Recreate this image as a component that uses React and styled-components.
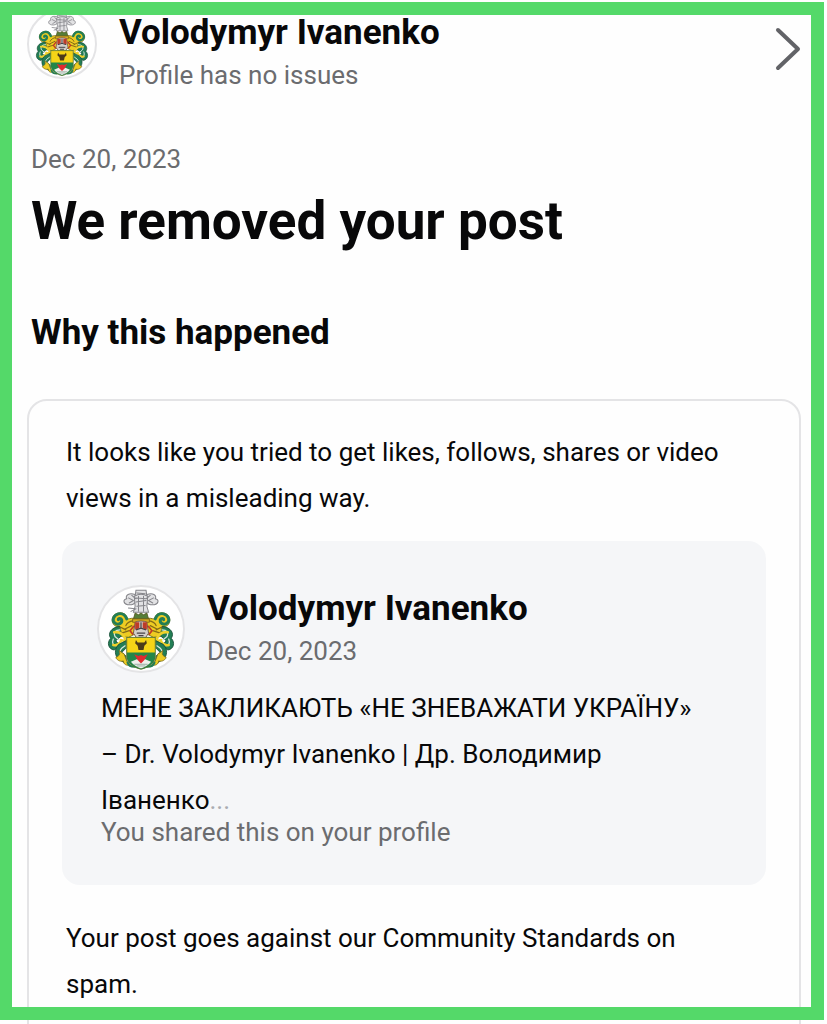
/**
 * Post removal notice page
 * Shows the profile status, the reason for the removal and the post itself
 */

import React from 'react';
import styled, { createGlobalStyle } from 'styled-components';

const GlobalStyle = createGlobalStyle`
  * {
    box-sizing: border-box;
  }

  body {
    margin: 0;
    background: #fefefe;
    color: #080809;
    font-family: Roboto, "Noto Sans", sans-serif;
  }

  h1, h2, p {
    margin: 0;
  }
`;

const Page = styled.main`
  position: relative;
  height: 100vh;
  padding: 9px 26px 0 27px;
  overflow: hidden;
`;

const Frame = styled.div`
  position: absolute;
  inset: 2px 3px 4px 0;
  border: 13px solid #54d969;
  border-left-width: 12px;
  pointer-events: none;
`;

const ProfileLink = styled.a`
  display: flex;
  align-items: flex-start;
  gap: 22px;
  color: inherit;
  text-decoration: none;
`;

const AvatarCircle = styled.span`
  flex: none;
  width: ${({ $size }) => $size}px;
  height: ${({ $size }) => $size}px;
  border: 2px solid #e4e4e6;
  border-radius: 50%;
  background: white;
  overflow: hidden;

  svg {
    display: block;
    width: 100%;
    height: 100%;
  }
`;

const ProfileText = styled.span`
  flex: 1;
  display: flex;
  flex-direction: column;
  padding-top: 2px;
`;

const Name = styled.strong`
  font-size: 35px;
  font-weight: 700;
  line-height: 44px;
`;

const Meta = styled.span`
  color: #6b6c6f;
  font-size: 26px;
  line-height: 40px;
`;

const Chevron = styled.svg`
  flex: none;
  width: 26px;
  height: 44px;
  margin-top: 18px;
`;

const Intro = styled.header`
  display: flex;
  flex-direction: column;
  padding: 44px 4px 0;
`;

const Title = styled.h1`
  font-size: 53px;
  font-weight: 700;
  line-height: 84px;
`;

const Subtitle = styled.h2`
  padding: 48px 4px 44px;
  font-size: 35px;
  font-weight: 700;
  line-height: 44px;
`;

const Card = styled.section`
  padding: 28px 33px 44px;
  border: 2px solid #e4e4e6;
  border-radius: 20px;
`;

const Paragraph = styled.p`
  padding: 0 24px 0 4px;
  font-size: 26px;
  line-height: 46px;
`;

const PostPreview = styled.article`
  margin: 20px 0 30px;
  padding: 44px 35px;
  border-radius: 18px;
  background: #f5f6f8;
`;

const PostAuthor = styled.div`
  display: flex;
  gap: 22px;
  margin-bottom: 12px;
`;

const More = styled.span`
  color: #a9abb0;
`;

const SharedNote = styled.p`
  padding: 0 4px;
  color: #6b6c6f;
  font-size: 26px;
  line-height: 18px;
`;

// One side of the mantling, mirrored for the other side
function Mantling() {
  return (
    <g strokeLinecap="round" strokeLinejoin="round">
      {/* upper scroll */}
      <path d="M45 38C40 36 37 38 34 38c-1-6-6-8-11-7-7 1-9 8-6 13 2 3 4 3 6 3-3 4-6 7-9 9l13 3 8 1 8-4z" fill="#edcb22" stroke="#6d6a1d" />
      <path d="M33 38c-2-5-6-7-10-6-6 2-8 8-4 11 4 3 9 0 8-4-1-2-4-2-4 0" fill="none" stroke="#237e55" strokeWidth="3.5" />
      <path d="M41 40c-5 1-8 3-9 6M39 46l-8 4M24 47l8 4M36 52l-9 3" fill="none" stroke="#836b18" strokeWidth="1.5" />
      <path d="M41 47l-4 5 3 4" fill="none" stroke="#c23827" strokeWidth="2" />

      {/* outer leaves */}
      <path d="M24 47c-10 1-14 9-10 14-5 5-3 13 4 14l7-5-5-6 7-6z" fill="#237e55" stroke="#174d36" />
      <path d="M25 51c-6 0-8 4-6 8l5 4M17 62c-2 5 0 8 4 8" fill="none" stroke="#d7e7de" strokeWidth="1.5" />
      <path d="M18 54c5-1 9 1 12 5l2 6-6-2M17 69c4 1 7-1 9-4" fill="none" stroke="#efd12b" strokeWidth="3" />

      {/* lower scroll */}
      <path d="M32 64l-8 4c-5 4-6 11-2 17l11 7-1-10-5-4 5-5z" fill="#237e55" stroke="#174d36" />
      <path d="M31 70l-4 3c-3 3-2 6 0 8" fill="none" stroke="#d7e7de" strokeWidth="1.5" />
      <path d="M24 76c2 4 0 6-4 8 2 4 6 5 9 4 0 4 4 6 8 5l-4-5-3-8z" fill="#edcb22" stroke="#80701e" />
      <path d="M34 90c1 3 4 5 8 5" fill="none" stroke="#237e55" strokeWidth="2.5" />
    </g>
  );
}

function Crest() {
  return (
    <svg viewBox="0 0 100 100" aria-hidden="true">
      <Mantling />
      <g transform="translate(100 0) scale(-1 1)">
        <Mantling />
      </g>

      {/* plumes */}
      <g fill="#e2e2e4" stroke="#85858a" strokeWidth="1.2" strokeLinecap="round">
        <path d="M44 4h12l1 7H43z" />
        <path d="M43 9c-7-3-12 1-10 5-5 1-4 6 1 7 5 1 9-1 10-4zM57 9c7-3 12 1 10 5 5 1 4 6-1 7-5 1-9-1-10-4z" />
        <path d="M42 11c5-3 11-3 16 0l-1 12 2 7H41l2-7z" />
        <path d="M35 13l6 3-5 3M39 10l5 4M45 7l10 1M44 13l12 1M44 18l12-2M45 23l10-1M47 11v18M53 11v18M65 13l-6 3 5 3M61 10l-5 4M35 25l8 1M38 29l6-3" fill="none" />
      </g>

      {/* crown and helmet */}
      <path d="M43 31l4 2 3-2 3 2 4-2 2 7H41z" fill="#557d38" stroke="#56571f" />
      <path d="M40 38h20v4H40z" fill="#d5a91e" stroke="#80671a" />
      <path d="M43 42c3-2 11-2 14 0l2 13-4 6H45l-4-6z" fill="#d3d0cb" stroke="#674337" />
      <path d="M43 42h5v7l-5 2zM57 42h-5v7l5 2z" fill="#bd3b28" />
      <path d="M50 42v8M44 51l6-2 6 2M45 55h10M47 58h6" fill="none" stroke="#484247" strokeWidth="1.5" />

      {/* shield */}
      <path d="M33 60h34v22c0 8-6 13-17 16-11-3-17-8-17-16z" fill="#23864a" />
      <path d="M33 60h34v18H33z" fill="#f5d417" />
      <path d="M38 89l7-3h10l7 3c-3 4-7 6-12 8-5-2-9-4-12-8z" fill="#edf0eb" />
      <path d="M42 80l5 2 3-1 3 1 5-2-4 7-4 4-4-4z" fill="#df2930" />
      <path d="M44 63l2 3h8l2-3 1 4-3 3-1 5h-6l-1-5-3-3z" fill="#4b3b19" />
      <path d="M33 60h34v22c0 8-6 13-17 16-11-3-17-8-17-16z" fill="none" stroke="#57702a" />
      <path d="M42 92h16M45 94h10" stroke="#8ea197" />
    </svg>
  );
}

function Avatar({ size }) {
  return (
    <AvatarCircle $size={size}>
      <Crest />
    </AvatarCircle>
  );
}

function App() {
  return (
    <Page>
      <GlobalStyle />

      <ProfileLink href="#profile">
        <Avatar size={70} />
        <ProfileText>
          <Name>Volodymyr Ivanenko</Name>
          <Meta>Profile has no issues</Meta>
        </ProfileText>
        <Chevron viewBox="0 0 26 44" aria-hidden="true">
          <path
            d="M3 3l20 19L3 41"
            fill="none"
            stroke="#626367"
            strokeWidth="4"
            strokeLinecap="round"
            strokeLinejoin="round"
          />
        </Chevron>
      </ProfileLink>

      <Intro>
        <Meta>Dec 20, 2023</Meta>
        <Title>We removed your post</Title>
      </Intro>

      <Subtitle>Why this happened</Subtitle>

      <Card>
        <Paragraph>
          It looks like you tried to get likes, follows, shares or video views in a misleading way.
        </Paragraph>

        <PostPreview>
          <PostAuthor>
            <Avatar size={88} />
            <ProfileText>
              <Name>Volodymyr Ivanenko</Name>
              <Meta>Dec 20, 2023</Meta>
            </ProfileText>
          </PostAuthor>
          <Paragraph>
            МЕНЕ ЗАКЛИКАЮТЬ «НЕ ЗНЕВАЖАТИ УКРАЇНУ» – Dr. Volodymyr Ivanenko | Др. Володимир
            Іваненко<More>...</More>
          </Paragraph>
          <SharedNote>You shared this on your profile</SharedNote>
        </PostPreview>

        <Paragraph>Your post goes against our Community Standards on spam.</Paragraph>
      </Card>

      <Frame />
    </Page>
  );
}

export default App;
